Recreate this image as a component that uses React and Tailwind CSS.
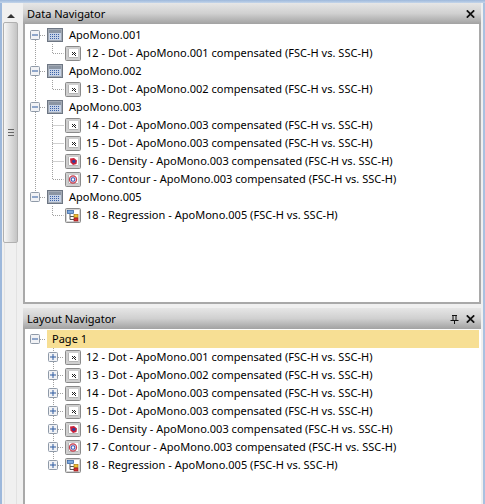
const F = { fontFamily: '"Noto Sans", "Liberation Sans", sans-serif' };
const DOT = "#a0a0a0";

function Expander({ open }) {
  return (
    <svg width="10" height="10" viewBox="0 0 10 10" className="shrink-0">
      <rect x="0.5" y="0.5" width="9" height="9" rx="1" fill="#f1f2f5" stroke="#8f9aa8" />
      <rect x="2" y="4.5" width="6" height="1" fill="#2f5aa0" />
      {!open && <rect x="4.5" y="2" width="1" height="6" fill="#2f5aa0" />}
    </svg>
  );
}

function TableIcon() {
  return (
    <svg width="16" height="14" viewBox="0 0 16 14" className="shrink-0">
      <rect x="0.5" y="0.5" width="15" height="13" fill="#a4abb5" stroke="#6d7683" />
      <rect x="2" y="2" width="12" height="3" fill="#8b95a3" />
      <rect x="2" y="5" width="12" height="7" fill="#c6d2e6" />
      <path d="M3 6.5h10M3 8.5h10M3 10.5h10" stroke="#3d63a8" strokeDasharray="1 1" />
    </svg>
  );
}

function Frame({ children }) {
  return (
    <svg width="16" height="15" viewBox="0 0 16 15" className="shrink-0">
      <rect x="0.5" y="0.5" width="15" height="14" rx="1" fill="#cfcfcf" stroke="#8a8a8a" />
      <rect x="3" y="3" width="10" height="9" fill="#fff" />
      <path d="M3.5 3v8.5H13" stroke="#b5b5b5" fill="none" />
      {children}
    </svg>
  );
}

function PlotIcon({ kind }) {
  if (kind === "dot")
    return (
      <Frame>
        <path d="M7 6h1v1H7zM9 6h1v1H9zM8 7h1v1H8zM10 7h1v1h-1zM7 8h1v1H7zM9 8h1v1H9zM10 9h1v1h-1z" fill="#222" />
      </Frame>
    );
  if (kind === "density")
    return (
      <Frame>
        <path d="M5 4.5L9 4l3 2.5L11.5 10 8 11 5.5 8.5z" fill="#c9203a" />
        <ellipse cx="8.8" cy="7.5" rx="1.7" ry="1.4" fill="#2b3f9e" />
      </Frame>
    );
  if (kind === "contour")
    return (
      <Frame>
        <circle cx="8" cy="7.5" r="3.6" fill="#e8c4d0" stroke="#c94050" strokeWidth="1.1" />
        <circle cx="8" cy="7.5" r="1.8" fill="#fff" stroke="#3a60c0" strokeWidth="1.1" />
      </Frame>
    );
  return (
    <svg width="16" height="15" viewBox="0 0 16 15" className="shrink-0">
      <rect x="0.5" y="0.5" width="15" height="14" rx="1" fill="#d4d4d4" stroke="#8a8a8a" />
      <rect x="2" y="2" width="12" height="11" fill="#fff" />
      <rect x="2.5" y="2.5" width="6" height="3" fill="#7ba7dc" stroke="#2c5a9c" strokeWidth="0.7" />
      <path d="M5 6v5.5h4M5 8.5h4" stroke="#555" fill="none" />
      <rect x="9" y="6.5" width="4" height="3" fill="#f0c030" stroke="#a87a10" strokeWidth="0.7" />
      <rect x="9" y="10" width="4" height="3" fill="#d83030" stroke="#901818" strokeWidth="0.7" />
    </svg>
  );
}

function ParentRow({ label, highlight, tail = true, lead = false }) {
  return (
    <div className="flex h-[18px] items-center">
      <div className="relative flex h-[18px] w-[22px] shrink-0 items-center pl-[5px]">
        <Expander open />
        <svg width="22" height="18" viewBox="0 0 22 18" className="absolute left-0 top-0">
          <path d="M15 9.5h6" stroke={DOT} strokeDasharray="1 1" />
          {lead && <path d="M10.5 0v4" stroke={DOT} strokeDasharray="1 1" />}
          {tail && <path d="M10.5 14v4" stroke={DOT} strokeDasharray="1 1" />}
        </svg>
      </div>
      {highlight ? (
        <div className="flex h-[18px] flex-1 items-center bg-[#f7df94] pl-[5px] text-[11px] tracking-[0.02px] text-black">{label}</div>
      ) : (
        <>
          <TableIcon />
          <span className="pl-[6px] text-[11px] tracking-[0.02px] text-black">{label}</span>
        </>
      )}
    </div>
  );
}

function ChildRow({ label, kind, last, collapsed, trunk }) {
  return (
    <div className="flex h-[18px] items-center">
      {collapsed ? (
        <div className="relative flex h-[18px] w-[40px] shrink-0 items-center pl-[23px]">
          <Expander />
          <svg width="40" height="18" viewBox="0 0 40 18" className="absolute left-0 top-0">
            <path d="M33 9.5h6" stroke={DOT} strokeDasharray="1 1" />
            <path d="M28.5 0v4" stroke={DOT} strokeDasharray="1 1" />
            {!last && <path d="M28.5 14v4" stroke={DOT} strokeDasharray="1 1" />}
          </svg>
        </div>
      ) : (
        <svg width="40" height="18" viewBox="0 0 40 18" className="shrink-0">
          {trunk && <path d="M10.5 0v18" stroke={DOT} strokeDasharray="1 1" />}
          <path d={last ? "M27.5 0v9.5h11" : "M27.5 0v18M27.5 9.5h11"} fill="none" stroke={DOT} strokeDasharray="1 1" />
        </svg>
      )}
      <PlotIcon kind={kind} />
      <span className="whitespace-nowrap pl-[5px] text-[11px] tracking-[0.02px] text-black">{label}</span>
    </div>
  );
}

function PanelHeader({ title, pin }) {
  return (
    <div className="flex h-[21px] shrink-0 items-center justify-between bg-gradient-to-b from-[#e6e6e6] via-[#d0d0d0] to-[#a2a2a2] pb-[0px] pl-[4px] pr-[6px] pt-[1px] text-[11px] text-black">
      <span>{title}</span>
      <div className="flex items-center gap-[7px]">
        {pin && (
          <svg width="9" height="9" viewBox="0 0 9 9">
            <path d="M2 0.5h5M3 1v4M6 1v4M0.5 5.5h8M4.5 6v3" stroke="#111" fill="none" />
          </svg>
        )}
        <svg width="9" height="8" viewBox="0 0 9 8">
          <path d="M0.8 0.3l7.4 7.4M8.2 0.3l-7.4 7.4" stroke="#111" strokeWidth="1.7" fill="none" />
        </svg>
      </div>
    </div>
  );
}

const data = [
  ["12 - Dot - ApoMono.001 compensated (FSC-H vs. SSC-H)", "dot"],
  ["13 - Dot - ApoMono.002 compensated (FSC-H vs. SSC-H)", "dot"],
  ["14 - Dot - ApoMono.003 compensated (FSC-H vs. SSC-H)", "dot"],
  ["15 - Dot - ApoMono.003 compensated (FSC-H vs. SSC-H)", "dot"],
  ["16 - Density - ApoMono.003 compensated (FSC-H vs. SSC-H)", "density"],
  ["17 - Contour - ApoMono.003 compensated (FSC-H vs. SSC-H)", "contour"],
  ["18 - Regression - ApoMono.005 (FSC-H vs. SSC-H)", "reg"],
];

export default function App() {
  return (
    <div style={F} className="flex h-[504px] w-[485px] flex-col overflow-hidden bg-[#f0f0f0]">
      <div className="h-[3px] shrink-0 bg-gradient-to-b from-[#9db8db] to-[#c4d5ea]" />
      <div className="flex min-h-0 flex-1">
        <div className="w-[2px] shrink-0 bg-[#9db8db]" />
        <div className="flex w-[21px] shrink-0 flex-col pl-[1px] pr-[5px] pt-[7px]">
          <div className="flex h-[12px] shrink-0 items-center justify-center">
            <svg width="8" height="4" viewBox="0 0 8 4"><path d="M4 0l4 4H0z" fill="#333" /></svg>
          </div>
          <div className="flex h-[221px] shrink-0 items-center justify-center rounded-[2px] border border-[#b0b0b0] bg-gradient-to-r from-[#f6f6f6] to-[#c4c4c4]">
            <svg width="6" height="7" viewBox="0 0 6 7"><path d="M0 .5h6M0 3.5h6M0 6.5h6" stroke="#666" /></svg>
          </div>
          <div className="mx-[1px] flex-1 border-x border-[#e2e2e2]" />
        </div>
        <div className="flex min-w-0 flex-1 flex-col">
          <PanelHeader title="Data Navigator" />
          <div className="h-[280px] shrink-0 border-x-2 border-b-2 border-[#a9a9a9] bg-white pt-[2px]">
            <ParentRow label="ApoMono.001" />
            <ChildRow label={data[0][0]} kind="dot" last trunk />
            <ParentRow label="ApoMono.002" lead />
            <ChildRow label={data[1][0]} kind="dot" last trunk />
            <ParentRow label="ApoMono.003" lead />
            <ChildRow label={data[2][0]} kind="dot" trunk />
            <ChildRow label={data[3][0]} kind="dot" trunk />
            <ChildRow label={data[4][0]} kind="density" trunk />
            <ChildRow label={data[5][0]} kind="contour" last trunk />
            <ParentRow label="ApoMono.005" lead tail={false} />
            <ChildRow label={data[6][0]} kind="reg" last />
          </div>
          <div className="h-[4px] shrink-0" />
          <PanelHeader title="Layout Navigator" pin />
          <div className="flex-1 border-l-2 border-[#a9a9a9] bg-white pl-0 pr-[2px] pt-[1px]">
            <ParentRow label="Page 1" highlight tail={false} />
            {data.map(([l, k], i) => (
              <ChildRow key={l} label={l} kind={k} collapsed last={i === 6} />
            ))}
          </div>
        </div>
        <div className="w-[2px] shrink-0 bg-[#f0f0f0]" />
        <div className="w-[2px] shrink-0 bg-[#a9c1e0]" />
      </div>
    </div>
  );
}
